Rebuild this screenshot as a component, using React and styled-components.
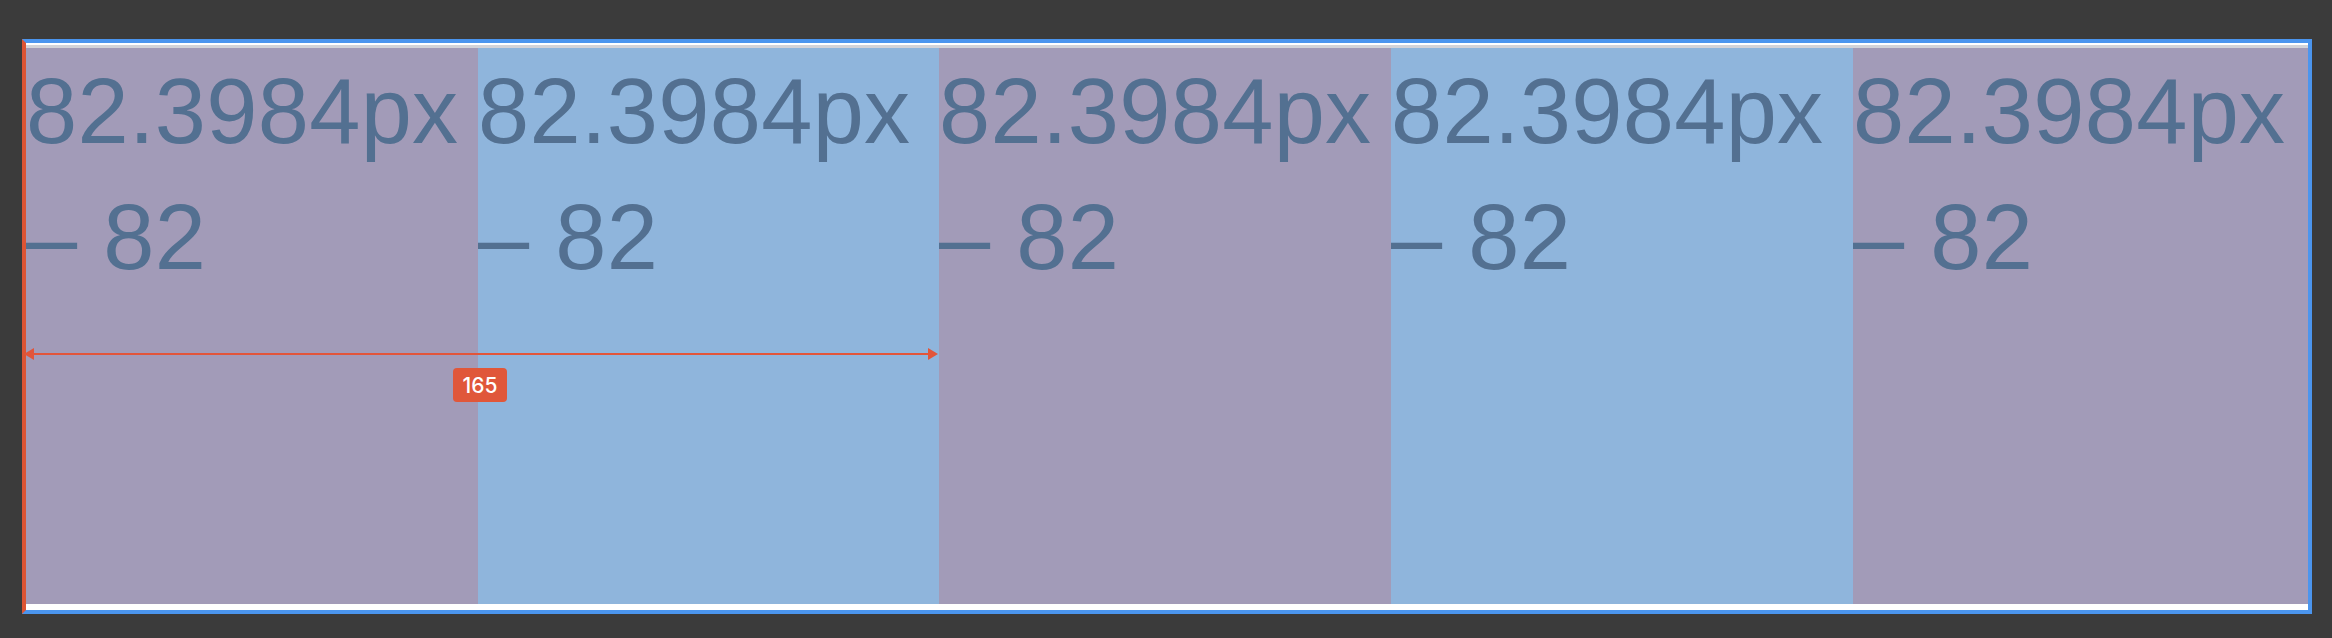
import React from 'react'
import styled, { createGlobalStyle } from 'styled-components'

const GlobalStyle = createGlobalStyle`
  html, body {
    margin: 0;
    padding: 0;
    background: #3b3b3b;
  }
`

const Page = styled.div`
  width: 2332px;
  height: 638px;
  padding: 39px 0 0 22px;
  box-sizing: border-box;
`

const Frame = styled.div`
  position: relative;
  width: 2290px;
  box-sizing: border-box;
  background: #ffffff;
  border: 4px solid #4b95ee;
  border-left-color: #dc5434;
  padding: 2px 0 6px;
`

const Track = styled.div`
  display: flex;
  height: 556px;
  border-top: 3px solid #d3d3d8;
`

const Column = styled.div`
  flex: none;
  width: ${p => p.w}px;
  background: ${p => (p.alt ? '#8fb5dc' : '#a29bb8')};
  color: #537091;
  font-family: 'Liberation Sans', Arial, sans-serif;
  font-size: 92px;
  letter-spacing: 0.3px;
  line-height: 126px;
  overflow: hidden;

  span {
    display: block;
    margin-top: 0;
  }
`

const Measure = styled.svg`
  position: absolute;
  left: -2px;
  top: 305px;
  overflow: visible;
`

const Badge = styled.div`
  position: absolute;
  left: 427px;
  top: 325px;
  width: 54px;
  height: 34px;
  border-radius: 4px;
  background: #e0573a;
  color: #fff;
  font-family: Inter, 'Liberation Sans', sans-serif;
  font-weight: 500;
  font-size: 21px;
  display: flex;
  align-items: center;
  justify-content: center;
`

const widths = [452, 461, 452, 462, 455]

const App = () => (
  <Page>
    <GlobalStyle />
    <Frame>
      <Track>
        {widths.map((w, i) => (
          <Column key={i} w={w} alt={i % 2 === 1}>
            <span>82.3984px – 82</span>
          </Column>
        ))}
      </Track>
      <Measure width='914' height='12' viewBox='0 0 914 12'>
        <line x1='4' y1='6' x2='910' y2='6' stroke='#e2553a' strokeWidth='2' />
        <polygon points='0,6 10,0 10,12' fill='#e2553a' />
        <polygon points='914,6 904,0 904,12' fill='#e2553a' />
      </Measure>
      <Badge>165</Badge>
    </Frame>
  </Page>
)

export default App
